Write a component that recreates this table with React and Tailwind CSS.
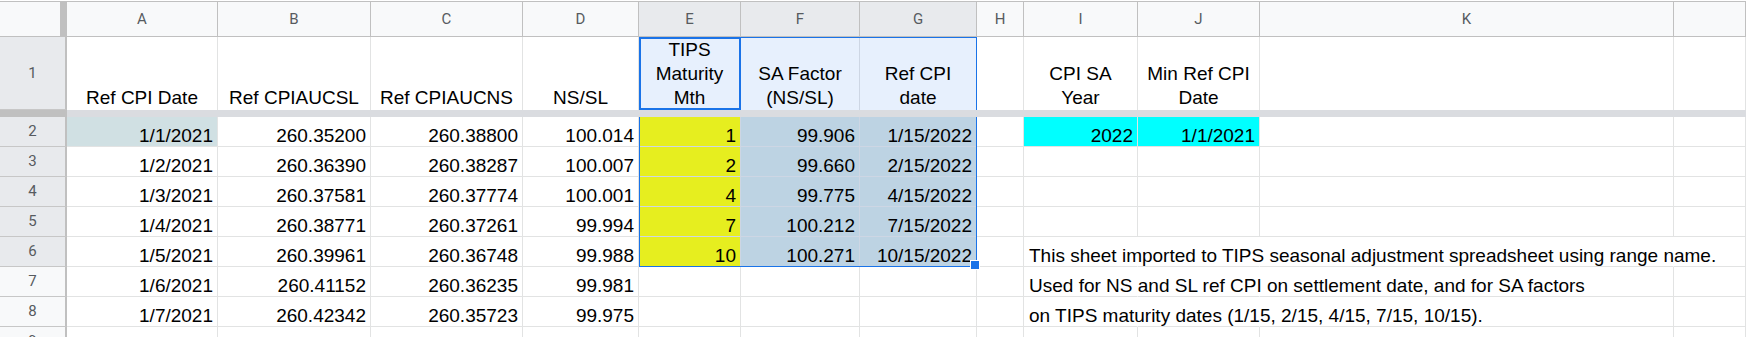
import React from 'react'

const W = [
  'w-[67px]', 'w-[151px]', 'w-[153px]', 'w-[152px]', 'w-[116px]', 'w-[102px]', 'w-[119px]',
  'w-[117px]', 'w-[47px]', 'w-[114px]', 'w-[122px]', 'w-[414px]', 'flex-1',
]
const LETTERS = ['A', 'B', 'C', 'D', 'E', 'F', 'G', 'H', 'I', 'J', 'K', '']

const HEAD = [
  ['Ref CPI Date'],
  ['Ref CPIAUCSL'],
  ['Ref CPIAUCNS'],
  ['NS/SL'],
  ['TIPS', 'Maturity', 'Mth'],
  ['SA Factor', '(NS/SL)'],
  ['Ref CPI', 'date'],
  [],
  ['CPI SA', 'Year'],
  ['Min Ref CPI', 'Date'],
  [],
  [],
]

const DATA = [
  ['1/1/2021', '260.35200', '260.38800', '100.014', '1', '99.906', '1/15/2022', '', '2022', '1/1/2021'],
  ['1/2/2021', '260.36390', '260.38287', '100.007', '2', '99.660', '2/15/2022'],
  ['1/3/2021', '260.37581', '260.37774', '100.001', '4', '99.775', '4/15/2022'],
  ['1/4/2021', '260.38771', '260.37261', '99.994', '7', '100.212', '7/15/2022'],
  ['1/5/2021', '260.39961', '260.36748', '99.988', '10', '100.271', '10/15/2022'],
  ['1/6/2021', '260.41152', '260.36235', '99.981'],
  ['1/7/2021', '260.42342', '260.35723', '99.975'],
]

// notes sitting in column I and running over J, K (and L on the first line)
const NOTES = {
  4: { text: 'This sheet imported to TIPS seasonal adjustment spreadsheet using range name.', spans: 3 },
  5: { text: 'Used for NS and SL ref CPI on settlement date, and for SA factors', spans: 2 },
  6: { text: 'on TIPS maturity dates (1/15, 2/15, 4/15, 7/15, 10/15).', spans: 2 },
}

const font = { fontFamily: '"Liberation Sans", Arial, sans-serif' }

function cellBg(r, c) {
  if (r === 0 && c === 0) return 'bg-[#d0e0e3]'
  if (r < 5 && c === 4) return 'bg-[#e6ee1f]'
  if (r < 5 && (c === 5 || c === 6)) return 'bg-[#bdd3e3]'
  if (r === 0 && (c === 8 || c === 9)) return 'bg-[#00ffff]'
  return ''
}

function inSel(r, c) {
  return r < 5 && c >= 4 && c <= 6
}

export default function App() {
  return (
    <div className="relative h-[337px] w-[1746px] overflow-hidden bg-white text-black" style={font}>
      {/* column letters */}
      <div className="mt-px flex h-[36px] border-t border-b border-[#c0c0c0]">
        <div className="w-[67px] shrink-0 border-r-[7px] border-[#c0c0c0] bg-[#f8f9fa]" />
        {LETTERS.map((l, i) => (
          <div
            key={i}
            className={`${W[i + 1]} shrink-0 flex items-center justify-center border-r border-[#c0c0c0] text-[15px] text-[#575b60] ${i >= 4 && i <= 6 ? 'bg-[#e8eaed]' : 'bg-[#f8f9fa]'}`}
            style={{ fontFamily: 'Roboto, "Liberation Sans", sans-serif' }}
          >
            {l}
          </div>
        ))}
      </div>

      {/* row 1: headings */}
      <div className="flex h-[73px]">
        <RowNum n={1} on />
        {HEAD.map((lines, i) => (
          <div
            key={i}
            className={`${W[i + 1]} shrink-0 flex flex-col items-center justify-end border-r text-[19px] leading-[24px] text-center ${i >= 4 && i <= 6 ? 'bg-[#e7f0fd] border-[#cdd6e4]' : 'border-[#e2e3e3]'}`}
          >
            {lines.map(t => <div key={t}>{t}</div>)}
          </div>
        ))}
      </div>

      {/* frozen row divider */}
      <div className="flex h-[7px]">
        <div className="w-[67px] shrink-0 bg-[#c0c0c0]" />
        <div className="flex-1 bg-[#dadce0]" />
      </div>

      {DATA.map((row, r) => {
        const note = NOTES[r]
        return (
          <div key={r} className="flex h-[30px]">
            <RowNum n={r + 2} on={r < 5} />
            {LETTERS.map((_, c) => {
              const hideRight = note && c >= 8 && c < 8 + note.spans
              const line = inSel(r, c) ? 'border-[#cdd6e4]' : 'border-[#e2e3e3]'
              return (
                <div
                  key={c}
                  className={`${W[c + 1]} shrink-0 relative flex items-end justify-end border-b border-r pr-[4px] text-[19px] leading-[20px] ${line} ${cellBg(r, c)} ${hideRight ? 'border-r-transparent' : ''}`}
                >
                  {note && c === 8 ? (
                    <span className="absolute left-[5px] bottom-0 z-10 whitespace-nowrap">{note.text}</span>
                  ) : (
                    row[c] || ''
                  )}
                </div>
              )
            })}
          </div>
        )
      })}

      {/* row 9, cut off by the window */}
      <div className="flex h-[30px]">
        <RowNum n={9} />
        {LETTERS.map((_, c) => (
          <div key={c} className={`${W[c + 1]} shrink-0 border-r border-b border-[#e2e3e3]`} />
        ))}
      </div>

      {/* selection E1:G6 */}
      <div className="absolute left-[639px] top-[37px] h-[73px] w-[338px] border-t border-r border-[#1a73e8]" />
      <div className="absolute left-[639px] top-[117px] h-[150px] w-[338px] border-l border-r border-b border-[#1a73e8]" />
      <div className="absolute left-[639px] top-[37px] h-[73px] w-[102px] border-2 border-[#1a73e8]" />
      <div className="absolute left-[970px] top-[260px] h-[10px] w-[10px] border border-white bg-[#1a73e8]" />
    </div>
  )
}

function RowNum({ n, on }) {
  return (
    <div
      className={`w-[67px] shrink-0 flex items-center justify-center border-r-2 border-b border-r-[#c0c0c0] border-b-[#c7c7c7] text-[15px] text-[#575b60] ${on ? 'bg-[#e8eaed]' : 'bg-[#f8f9fa]'}`}
      style={{ fontFamily: 'Roboto, "Liberation Sans", sans-serif' }}
    >
      {n}
    </div>
  )
}
